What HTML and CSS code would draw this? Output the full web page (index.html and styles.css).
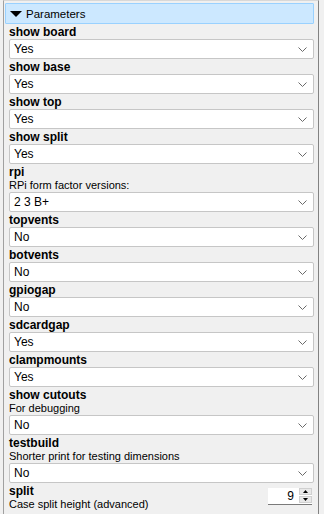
FILE: index.html
```html
<!DOCTYPE html>
<html lang="en">
<head>
    <meta charset="UTF-8">
    <title>Parameters</title>
    <link rel="stylesheet" href="styles.css">
</head>
<body>
    <div class="panel">
        <div class="panel-header">
            <span class="arrow"></span>
            <span>Parameters</span>
        </div>

        <div class="param">
            <div class="param-name">show board</div>
            <div class="combo"><span>Yes</span><svg width="9" height="5" viewBox="0 0 9 5"><polyline points="0.5,0.5 4.5,4.5 8.5,0.5"/></svg></div>
        </div>
        <div class="param">
            <div class="param-name">show base</div>
            <div class="combo"><span>Yes</span><svg width="9" height="5" viewBox="0 0 9 5"><polyline points="0.5,0.5 4.5,4.5 8.5,0.5"/></svg></div>
        </div>
        <div class="param">
            <div class="param-name">show top</div>
            <div class="combo"><span>Yes</span><svg width="9" height="5" viewBox="0 0 9 5"><polyline points="0.5,0.5 4.5,4.5 8.5,0.5"/></svg></div>
        </div>
        <div class="param">
            <div class="param-name">show split</div>
            <div class="combo"><span>Yes</span><svg width="9" height="5" viewBox="0 0 9 5"><polyline points="0.5,0.5 4.5,4.5 8.5,0.5"/></svg></div>
        </div>
        <div class="param">
            <div class="param-name">rpi</div>
            <div class="param-desc">RPi form factor versions:</div>
            <div class="combo"><span>2 3 B+</span><svg width="9" height="5" viewBox="0 0 9 5"><polyline points="0.5,0.5 4.5,4.5 8.5,0.5"/></svg></div>
        </div>
        <div class="param">
            <div class="param-name">topvents</div>
            <div class="combo"><span>No</span><svg width="9" height="5" viewBox="0 0 9 5"><polyline points="0.5,0.5 4.5,4.5 8.5,0.5"/></svg></div>
        </div>
        <div class="param">
            <div class="param-name">botvents</div>
            <div class="combo"><span>No</span><svg width="9" height="5" viewBox="0 0 9 5"><polyline points="0.5,0.5 4.5,4.5 8.5,0.5"/></svg></div>
        </div>
        <div class="param">
            <div class="param-name">gpiogap</div>
            <div class="combo"><span>No</span><svg width="9" height="5" viewBox="0 0 9 5"><polyline points="0.5,0.5 4.5,4.5 8.5,0.5"/></svg></div>
        </div>
        <div class="param">
            <div class="param-name">sdcardgap</div>
            <div class="combo"><span>Yes</span><svg width="9" height="5" viewBox="0 0 9 5"><polyline points="0.5,0.5 4.5,4.5 8.5,0.5"/></svg></div>
        </div>
        <div class="param">
            <div class="param-name">clampmounts</div>
            <div class="combo"><span>Yes</span><svg width="9" height="5" viewBox="0 0 9 5"><polyline points="0.5,0.5 4.5,4.5 8.5,0.5"/></svg></div>
        </div>
        <div class="param">
            <div class="param-name">show cutouts</div>
            <div class="param-desc">For debugging</div>
            <div class="combo"><span>No</span><svg width="9" height="5" viewBox="0 0 9 5"><polyline points="0.5,0.5 4.5,4.5 8.5,0.5"/></svg></div>
        </div>
        <div class="param">
            <div class="param-name">testbuild</div>
            <div class="param-desc">Shorter print for testing dimensions</div>
            <div class="combo"><span>No</span><svg width="9" height="5" viewBox="0 0 9 5"><polyline points="0.5,0.5 4.5,4.5 8.5,0.5"/></svg></div>
        </div>
        <div class="param param-inline">
            <div class="param-text">
                <div class="param-name">split</div>
                <div class="param-desc">Case split height (advanced)</div>
            </div>
            <div class="spinbox">
                <span class="spin-value">9</span>
                <div class="spin-buttons">
                    <span class="spin-btn"><svg width="5" height="3" viewBox="0 0 5 3"><polygon points="2.5,0 5,3 0,3"/></svg></span>
                    <span class="spin-btn"><svg width="5" height="3" viewBox="0 0 5 3"><polygon points="0,0 5,0 2.5,3"/></svg></span>
                </div>
            </div>
        </div>
    </div>
</body>
</html>
```

FILE: styles.css
```css
* {
    margin: 0;
    padding: 0;
    box-sizing: border-box;
}

body {
    background-color: #f0f0f0;
    color: #000;
    font-family: 'Liberation Sans', Arial, sans-serif;
    font-size: 11px;
    width: 324px;
    height: 514px;
    overflow: hidden;
}

.panel {
    margin-left: 3px;
    width: 316px;
    min-height: 514px;
    border-left: 1px solid #a0a0a0;
    border-right: 1px solid #828282;
    border-top: 1px solid #d8d8d8;
    padding: 2px 4px 0 1px;
}

.panel-header {
    height: 21px;
    background-color: #cce8ff;
    border: 1px solid #99d1ff;
    border-radius: 1px;
    display: flex;
    align-items: center;
    gap: 4px;
    padding: 1px 0 0 4px;
    font-size: 11.5px;
}

.arrow {
    width: 0;
    height: 0;
    border-left: 6px solid transparent;
    border-right: 6px solid transparent;
    border-top: 6px solid #000;
}

.param {
    padding-left: 4px;
}

.param-name {
    font-weight: bold;
    font-size: 12px;
    line-height: 14px;
    padding-top: 1px;
}

.param-desc {
    line-height: 13px;
}

.combo {
    height: 20px;
    background-color: #fff;
    border: 1px solid #c6c6c6;
    border-radius: 2px;
    display: flex;
    align-items: center;
    justify-content: space-between;
    padding: 0 6px 0 4px;
    font-size: 12px;
}

.combo svg polyline {
    fill: none;
    stroke: #6a6a6a;
    stroke-width: 1;
}

.param-inline {
    display: flex;
    align-items: flex-start;
    justify-content: space-between;
}

.spinbox {
    margin-top: 5px;
    margin-right: 2px;
    width: 44px;
    height: 17px;
    background-color: #fff;
    border-bottom: 1px solid #7a7a7a;
    display: flex;
    justify-content: flex-end;
    font-size: 12px;
}

.spin-value {
    line-height: 16px;
    padding-right: 5px;
}

.spin-buttons {
    width: 13px;
    display: flex;
    flex-direction: column;
    gap: 1px;
    padding-bottom: 1px;
}

.spin-btn {
    flex: 1;
    background-color: #e8e8e8;
    border: 1px solid #d0d0d0;
    display: flex;
    align-items: center;
    justify-content: center;
}

.spin-btn svg polygon {
    fill: #000;
}
```
